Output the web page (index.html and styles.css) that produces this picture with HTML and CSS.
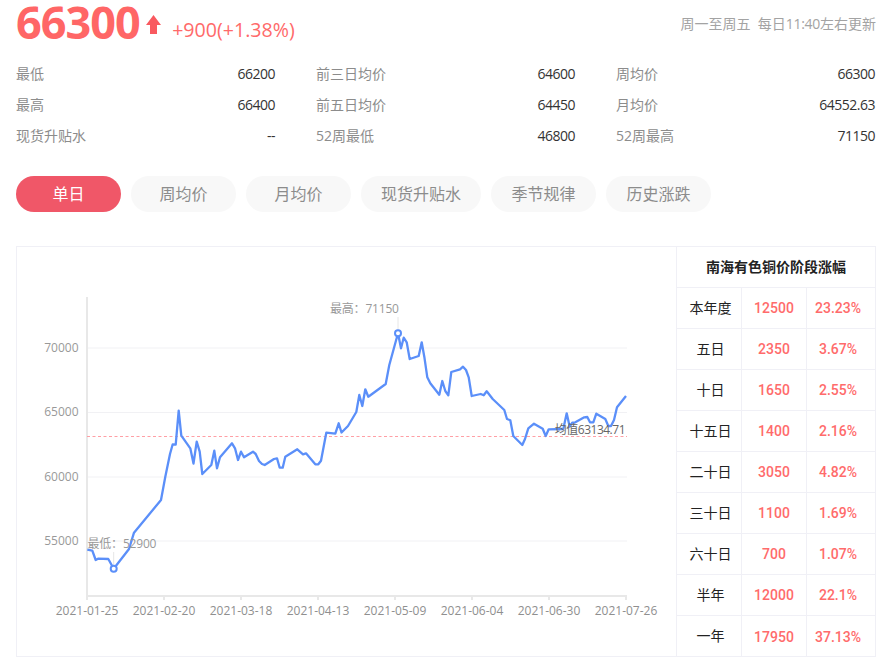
FILE: index.html
```html
<!DOCTYPE html>
<html lang="zh-CN">
<head>
<meta charset="utf-8">
<title>南海有色铜价</title>
<link rel="stylesheet" href="styles.css">
</head>
<body>
<main class="page">
  <header class="head">
    <div class="quote">
      <span class="price">66300</span>
      <svg class="arrow" width="15" height="19" viewBox="0 0 15 19"><path d="M7.5 0L15 10H11V19H4V10H0Z"/></svg>
      <span class="change">+900(+1.38%)</span>
    </div>
    <div class="note">周一至周五&nbsp; 每日<span class="time">11:40</span>左右更新</div>
  </header>
  <section class="stats">
    <div class="stat"><span class="k">最低</span><span class="v">66200</span></div>
    <div class="stat"><span class="k">前三日均价</span><span class="v">64600</span></div>
    <div class="stat"><span class="k">周均价</span><span class="v">66300</span></div>
    <div class="stat"><span class="k">最高</span><span class="v">66400</span></div>
    <div class="stat"><span class="k">前五日均价</span><span class="v">64450</span></div>
    <div class="stat"><span class="k">月均价</span><span class="v">64552.63</span></div>
    <div class="stat"><span class="k">现货升贴水</span><span class="v">--</span></div>
    <div class="stat"><span class="k">52周最低</span><span class="v">46800</span></div>
    <div class="stat"><span class="k">52周最高</span><span class="v">71150</span></div>
  </section>
  <nav class="tabs">
    <span class="tab active">单日</span>
    <span class="tab">周均价</span>
    <span class="tab">月均价</span>
    <span class="tab">现货升贴水</span>
    <span class="tab">季节规律</span>
    <span class="tab">历史涨跌</span>
  </nav>
  <section class="panel">
    <div class="chart">
      <svg width="659" height="409" viewBox="17 247 659 409">
        <g class="grid">
          <path d="M88 348H627M88 412.500H627M88 477H627M88 541H627"/>
        </g>
        <g class="axis">
          <path d="M87 297V597M86 596H627M87 596V600M164 596V600M241 596V600M318 596V600M395 596V600M472 596V600M549 596V600M626 596V600"/>
        </g>
        <g class="ylabels">
          <text x="78.500" y="352">70000</text>
          <text x="78.500" y="416">65000</text>
          <text x="78.500" y="481">60000</text>
          <text x="78.500" y="545">55000</text>
        </g>
        <g class="xlabels">
          <text x="87" y="615">2021-01-25</text>
          <text x="164" y="615">2021-02-20</text>
          <text x="241" y="615">2021-03-18</text>
          <text x="318" y="615">2021-04-13</text>
          <text x="395" y="615">2021-05-09</text>
          <text x="472" y="615">2021-06-04</text>
          <text x="549" y="615">2021-06-30</text>
          <text x="626" y="615">2021-07-26</text>
        </g>
        <path class="avg" d="M87 436.500H627"/>
        <path class="pin" d="M398 317V330M113.700 552V565"/>
        <polyline class="line" points="87.300,549.700 92.300,550.700 95.700,560 98,558.700 108.300,559 113.700,568.700 129,549 134,532.700 161,500 165.300,476.700 170,454 172.700,444.300 175.700,444.700 178.700,410.700 181.300,435.700 190.300,448.300 193.500,463.500 196.700,441.700 199.700,451.700 202.300,474 211.300,465 214.300,450.700 217,468.300 220,457.300 232,443.300 235,448.300 238,460 241,451.700 244,457.300 253,451.700 255.700,454 259,461 262,464 264.700,465 274,459 277,458.300 279.700,467.700 282.700,467.700 285.300,456.700 297.300,449.300 303,454.300 306,453.300 315.300,464.300 318.300,464.300 321,460.700 326.300,432.700 335.300,433.700 338.700,423.300 341.500,432.500 348,426 356.300,412 359.300,395 362.300,406 365.300,389.300 368.300,396.700 385.700,384 389.300,365 398,333.300 401,348.300 403.700,337.700 406.700,342.300 409.700,359 418.700,356 421.700,342.300 424.300,356.700 427.300,377.300 430.300,383.300 439.300,394.700 442.300,381 445.300,391 448.300,395.300 451.300,372 460,369.300 463,366.700 466,370 468.700,377.300 471.700,396 480.700,394 483.700,395.300 486.700,391.300 492.700,399 504.300,410 507,419 510.300,420.300 513.300,436 522.300,445 525,439 528.300,428.300 534,423.700 542.700,428.700 545.700,436 548.700,429.300 563.300,429 566.700,413.300 569.700,426.700 572.300,422.700 575.300,422.300 584.300,417.300 587.300,417 590,422.300 593.300,422.300 596.300,413.700 605.300,419 608.300,426 611,426 614,420 617,407.300 626,396"/>
        <circle class="dot" cx="398" cy="333.300" r="3"/>
        <circle class="dot" cx="113.700" cy="568.700" r="3"/>
        <text class="mark" x="330" y="313">最高：71150</text>
        <text class="mark" x="87.500" y="548">最低：52900</text>
        <text class="avgtext" x="625" y="433.500">均值63134.71</text>
      </svg>
    </div>
    <div class="table">
      <div class="title">南海有色铜价阶段涨幅</div>
      <div class="name">本年度</div><div class="num">12500</div><div class="num">23.23%</div>
      <div class="name">五日</div><div class="num">2350</div><div class="num">3.67%</div>
      <div class="name">十日</div><div class="num">1650</div><div class="num">2.55%</div>
      <div class="name">十五日</div><div class="num">1400</div><div class="num">2.16%</div>
      <div class="name">二十日</div><div class="num">3050</div><div class="num">4.82%</div>
      <div class="name">三十日</div><div class="num">1100</div><div class="num">1.69%</div>
      <div class="name">六十日</div><div class="num">700</div><div class="num">1.07%</div>
      <div class="name">半年</div><div class="num">12000</div><div class="num">22.1%</div>
      <div class="name">一年</div><div class="num">17950</div><div class="num">37.13%</div>
    </div>
  </section>
</main>
</body>
</html>
```
FILE: styles.css
```css
* { box-sizing: border-box; }
html, body { margin: 0; padding: 0; background: #fff; }
body { font-family: "Open Sans", "Noto Sans CJK SC", sans-serif; overflow: hidden; }
.page { width: 888px; height: 666px; padding: 0 12px 0 16px; }

.head { display: flex; justify-content: space-between; align-items: flex-start; height: 58px; }
.quote { display: flex; align-items: flex-start; height: 44px; }
.price { font-size: 45px; line-height: 43px; font-weight: 700; color: #ff6666; letter-spacing: -1px; }
.arrow { fill: #f9595f; margin: 15px 11.500px 0 6px; }
.change { font-size: 19.600px; line-height: 24px; margin-top: 18px; color: #ff6a6a; }
.note { font-size: 14px; line-height: 20px; margin-top: 14px; color: #a3a3a3; }
.time { letter-spacing: -0.3px; }

.stats { display: grid; grid-template-columns: repeat(3, 260px); column-gap: 40px; grid-auto-rows: 31px; }
.stat { display: flex; justify-content: space-between; align-items: center; font-size: 14px; line-height: 20px; height: 31px; }
.k, .v { display: block; height: 20px; line-height: 20px; }
.k { color: #8c8c8c; }
.v { color: #333; letter-spacing: -0.5px; margin-right: 1px; }

.tabs { display: flex; gap: 10px; margin-top: 25px; }
.tab { min-width: 105px; height: 36px; padding: 0 20px; border-radius: 18px; background: #f8f8f8; color: #8c8c8c; font-size: 16px; line-height: 36px; text-align: center; }
.tab.active { background: #f05768; color: #fff; }

.panel { display: flex; width: 860px; height: 411px; margin-top: 34px; border: 1px solid #f0f0f6; }
.chart { width: 659px; height: 409px; }
.chart svg { display: block; }
.grid path { stroke: #f1f1f4; stroke-width: 1; fill: none; }
.axis path { stroke: #e8e8e8; stroke-width: 2; fill: none; }
.ylabels text { font-size: 12px; fill: #999; text-anchor: end; }
.xlabels text { font-size: 12px; fill: #8f8f8f; text-anchor: middle; }
.avg { stroke: #ff9fa5; stroke-width: 1.200; stroke-dasharray: 3 2.500; fill: none; }
.pin { stroke: #e6e6e6; stroke-width: 1; fill: none; }
.line { fill: none; stroke: #5b8ff9; stroke-width: 2.300; stroke-linejoin: round; }
.dot { fill: #fff; stroke: #5b8ff9; stroke-width: 2; }
.mark { font-size: 12px; fill: #999; letter-spacing: -0.2px; }
.avgtext { font-size: 12px; fill: #666; text-anchor: end; letter-spacing: -0.5px; }

.table { flex: 1; display: grid; grid-template-columns: 65px 65px 1fr; grid-auto-rows: 41px; border-left: 1px solid #f0f0f6; line-height: 20px; }
.title { grid-column: 1 / -1; font-size: 14px; line-height: 20px; padding-bottom: 1px; font-weight: 700; color: #222; display: flex; align-items: center; justify-content: center; border-bottom: 1px solid #f0f0f6; }
.name, .num { display: flex; align-items: center; justify-content: center; border-bottom: 1px solid #f0f0f6; border-right: 1px solid #f0f0f6; }
.num:nth-child(3n+1) { border-right: 0; padding-right: 6px; }
.name { font-size: 14px; color: #222; padding: 0 0 1px 3px; }
.num { font-family: Roboto, "Noto Sans CJK SC", sans-serif; font-size: 14px; font-weight: 500; color: #ff6b6b; }
.table > :nth-last-child(-n+3) { border-bottom: 0; }
```
